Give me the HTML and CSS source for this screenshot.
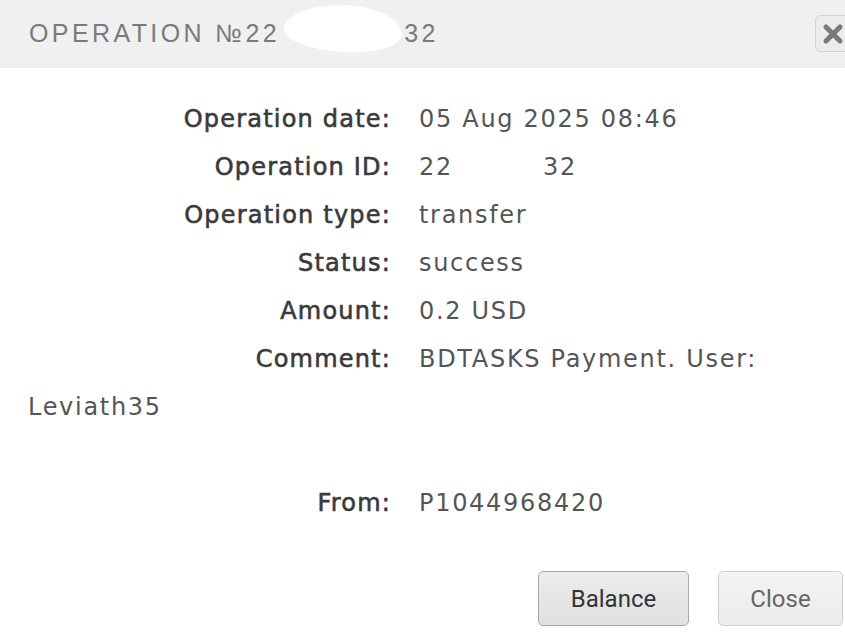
FILE: index.html
```html
<!DOCTYPE html>
<html>
<head>
<meta charset="utf-8">
<link rel="stylesheet" href="styles.css">
</head>
<body>
<div class="dialog">
  <div class="header">
    <div class="title">OPERATION №22<span class="gap"></span>32</div>
    <span class="blob"></span>
    <button class="x-btn" aria-label="close">
      <svg width="22" height="22" viewBox="0 0 22 22"><path d="M4 4 L18 18 M18 4 L4 18" stroke="#7a7a7a" stroke-width="5" stroke-linecap="round"/></svg>
    </button>
  </div>
  <div class="content">
    <div class="row"><span class="lbl">Operation date:</span>05 Aug 2025 08:46</div>
    <div class="row"><span class="lbl">Operation ID:</span>22<span class="idgap"></span>32</div>
    <div class="row"><span class="lbl">Operation type:</span>transfer</div>
    <div class="row"><span class="lbl">Status:</span>success</div>
    <div class="row"><span class="lbl">Amount:</span>0.2 USD</div>
    <div class="row comment"><span class="lbl">Comment:</span>BDTASKS Payment. User: Leviath35</div>
    <div class="row"><span class="lbl">From:</span>P1044968420</div>
  </div>
  <div class="buttons">
    <button class="btn balance">Balance</button>
    <button class="btn close">Close</button>
  </div>
</div>
</body>
</html>
```
FILE: styles.css
```css
html, body { margin: 0; padding: 0; background: #fff; }
body { width: 845px; height: 642px; overflow: hidden; }
.dialog { width: 845px; }
.header {
  position: relative;
  height: 68px;
  background: #f0f0f0;
  display: flex;
  align-items: center;
  padding-left: 29px;
}
.title {
  font-family: "Liberation Sans", sans-serif;
  font-size: 25px;
  letter-spacing: 3.4px;
  color: #7a7a7a;
  margin-top: -2px;
}
.gap { display: inline-block; width: 124px; }
.blob {
  position: absolute;
  left: 284px;
  top: 5px;
  width: 118px;
  height: 47px;
  background: #fff;
  border-radius: 55% 45% 50% 50% / 60% 55% 45% 40%;
  transform: rotate(4deg);
}
.x-btn {
  position: absolute;
  left: 815px;
  top: 15px;
  width: 40px;
  height: 37px;
  border: 1px solid #d4d4d4;
  border-radius: 5px;
  background: #ececec;
  padding: 0 0 0 6px;
  display: flex;
  align-items: center;
}
.content {
  padding: 27px 0 0 28px;
  font-family: "DejaVu Sans", sans-serif;
  font-size: 24px;
  letter-spacing: 1.7px;
  color: #555;
  line-height: 48px;
}
.lbl {
  display: inline-block;
  width: 391px;
  text-align: right;
  padding-right: 28px;
  box-sizing: border-box;
  color: #3a3a3a;
  -webkit-text-stroke: 0.6px #3a3a3a;
  letter-spacing: 1.2px;
}
.comment { margin-bottom: 48px; }
.idgap { display: inline-block; width: 90px; }
.buttons {
  display: flex;
  justify-content: flex-end;
  gap: 29px;
  padding: 44px 2px 0 0;
}
.btn {
  font-family: "Roboto", sans-serif;
  font-size: 24px;
  height: 55px;
  border-radius: 5px;
}
.balance {
  width: 151px;
  color: #333;
  border: 1px solid #a8a8a8;
  background: linear-gradient(#ececec, #e0e0e0);
}
.close {
  width: 125px;
  color: #666;
  border: 1px solid #d0d0d0;
  background: linear-gradient(#f4f4f4, #ebebeb);
}
```
